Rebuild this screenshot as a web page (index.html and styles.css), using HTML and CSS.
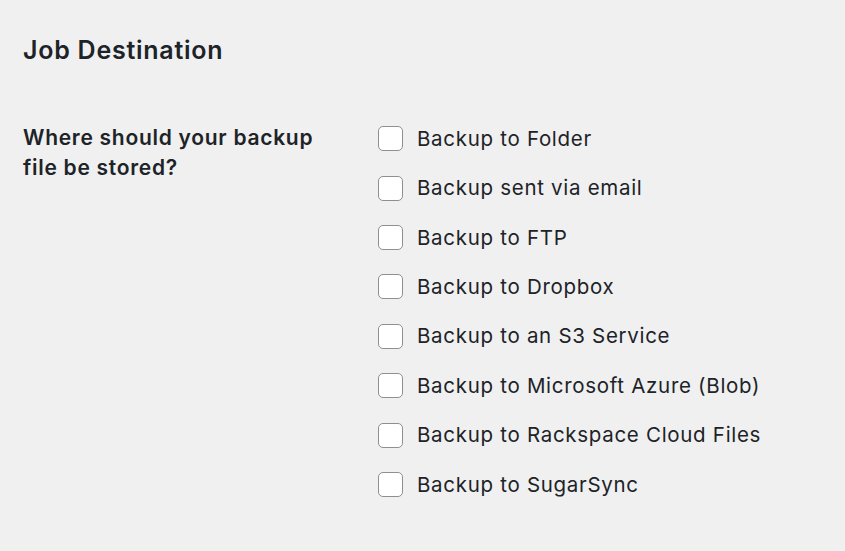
FILE: index.html
```html
<!DOCTYPE html>
<html>
<head>
<meta charset="utf-8">
<link rel="stylesheet" href="styles.css">
</head>
<body>
<div class="wrap">
  <h2 class="title">Job Destination</h2>
  <div class="form-row">
    <div class="row-label">Where should your backup file be stored?</div>
    <fieldset class="options">
      <label class="option"><span class="box"></span><span>Backup to Folder</span></label>
      <label class="option"><span class="box"></span><span>Backup sent via email</span></label>
      <label class="option"><span class="box"></span><span>Backup to FTP</span></label>
      <label class="option"><span class="box"></span><span>Backup to Dropbox</span></label>
      <label class="option"><span class="box"></span><span>Backup to an S3 Service</span></label>
      <label class="option"><span class="box"></span><span>Backup to Microsoft Azure (Blob)</span></label>
      <label class="option"><span class="box"></span><span>Backup to Rackspace Cloud Files</span></label>
      <label class="option"><span class="box"></span><span>Backup to SugarSync</span></label>
    </fieldset>
  </div>
</div>
</body>
</html>
```
FILE: styles.css
```css
html, body {
  margin: 0;
  padding: 0;
  background: #f0f0f1;
}
body {
  font-family: Inter, "Noto Sans", sans-serif;
  color: #1d2327;
}
.wrap {
  padding: 34px 23px 0 23px;
}
.title {
  margin: 0;
  font-size: 25px;
  font-weight: 600;
  line-height: 32px;
  letter-spacing: 0.75px;
}
.form-row {
  display: flex;
  margin-top: 48px;
}
.row-label {
  width: 320px;
  margin-right: 35px;
  padding-top: 9px;
  font-size: 21px;
  font-weight: 600;
  line-height: 29.5px;
  letter-spacing: 0.72px;
}
.options {
  border: 0;
  margin: 0;
  padding: 0;
  min-width: 0;
  display: flex;
  flex-direction: column;
}
.option {
  display: flex;
  align-items: center;
  gap: 14px;
  height: 49.43px;
  font-size: 20.5px;
  line-height: 30px;
  letter-spacing: 0.7px;
}
.box {
  width: 23px;
  height: 23px;
  border: 1px solid #8c8f94;
  border-radius: 5px;
  background: #fff;
  flex: none;
}
```
